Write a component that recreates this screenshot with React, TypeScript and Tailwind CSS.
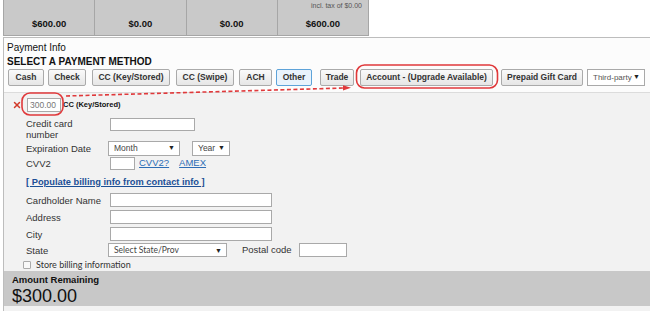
import { X } from 'lucide-react';

const totals = [
  { value: '$600.00' },
  { value: '$0.00' },
  { value: '$0.00' },
  { value: '$600.00', note: 'incl. tax of $0.00' },
];

const methods = [
  { label: 'Cash', w: 'w-[36px]', ml: 'ml-[1px]' },
  { label: 'Check', w: 'w-[38px]', ml: 'ml-[4px]' },
  { label: 'CC (Key/Stored)', w: 'w-[78px]', ml: 'ml-[6px]' },
  { label: 'CC (Swipe)', w: 'w-[58px]', ml: 'ml-[6px]' },
  { label: 'ACH', w: 'w-[33px]', ml: 'ml-[5px]' },
  { label: 'Other', w: 'w-[36px]', ml: 'ml-[4px]', active: true },
  { label: 'Trade', w: 'w-[34px]', ml: 'ml-[8px]' },
  { label: 'Account - (Upgrade Available)', w: 'w-[133px]', ml: 'ml-[6px]' },
  { label: 'Prepaid Gift Card', w: 'w-[82px]', ml: 'ml-[8px]' },
];

function FakeSelect({ text, className }: { text: string; className: string }) {
  return (
    <div
      className={`flex items-center justify-between whitespace-nowrap border border-[#a9a9a9] bg-white pl-[5px] pr-[4px] text-[8.5px] text-[#444] ${className}`}
    >
      <span>{text}</span>
      <span className="text-[7px] text-[#222]">▼</span>
    </div>
  );
}

function TextBox({ className }: { className: string }) {
  return <div className={`border border-[#a9a9a9] bg-white ${className}`} />;
}

function Label({ children }: { children: React.ReactNode }) {
  return <div className="w-[84px] shrink-0 text-[9.5px] leading-[11px] text-[#333]">{children}</div>;
}

export default function App() {
  return (
    <div className="relative h-[311px] w-[650px] overflow-hidden bg-white font-['Liberation_Sans',Arial,sans-serif]">
      {/* totals strip */}
      <div className="ml-[3px] grid h-[36px] w-[366px] grid-cols-4 border-b border-r border-[#a6a6a6] bg-[#c9c9c9]">
        {totals.map((t, i) => (
          <div key={i} className="relative flex items-end justify-center border-l border-[#a6a6a6] pb-[4px]">
            {t.note && (
              <span className="absolute right-[6px] top-[1px] text-[7px] text-[#555]">{t.note}</span>
            )}
            <span className="text-[9.5px] font-bold text-[#111]">{t.value}</span>
          </div>
        ))}
      </div>

      {/* payment panel */}
      <div className="ml-[3px] mt-[1px] border-l border-t border-[#bdbdbd]">
        <div className="bg-[#fcfcfc] pl-[3px] pt-[3px]">
          <div className="h-[14px] text-[10px] leading-[14px] text-[#111]">Payment Info</div>
          <div className="h-[14px] text-[10px] font-bold leading-[14px] text-[#111]">SELECT A PAYMENT METHOD</div>
          <div className="flex h-[23px] items-start">
            {methods.map((m) => (
              <button
                key={m.label}
                className={`${m.w} ${m.ml} flex h-[17px] shrink-0 items-center justify-center whitespace-nowrap rounded-[2px] border text-[8.5px] font-bold text-[#333] ${
                  m.active
                    ? 'border-[#5ea3d9] bg-[#e9f3fc]'
                    : 'border-[#aaaaaa] bg-gradient-to-b from-[#fafafa] to-[#e6e6e6]'
                }`}
              >
                {m.label}
              </button>
            ))}
            <FakeSelect text="Third-party" className="ml-[4px] h-[17px] w-[58px] pl-[4px] text-[8px] text-[#555]" />
          </div>
        </div>

        <div className="border-t border-[#dcdcdc] bg-[#f2f2f2]">
          {/* selected method row */}
          <div className="flex h-[24px] items-center">
            <X size={10} strokeWidth={3.5} className="ml-[8px] text-[#d23a2a]" />
            <div className="ml-[5px] flex h-[14px] w-[34px] items-center border border-[#a9a9a9] bg-white pl-[2px] text-[8.5px] text-[#777]">
              300.00
            </div>
            <span className="ml-[2px] text-[7.5px] font-bold text-[#111]">CC (Key/Stored)</span>
          </div>

          <div className="flex flex-col pl-[22px]">
            <div className="mt-[1px] flex h-[22px] items-start">
              <Label>
                Credit card
                <br />
                number
              </Label>
              <TextBox className="h-[13px] w-[85px]" />
            </div>
            <div className="flex h-[16px] items-center">
              <Label>Expiration Date</Label>
              <FakeSelect text="Month" className="-ml-[2px] h-[15px] w-[72px]" />
              <FakeSelect text="Year" className="ml-[12px] h-[15px] w-[38px]" />
            </div>
            <div className="flex h-[14px] items-center">
              <Label>CVV2</Label>
              <TextBox className="h-[13px] w-[25px]" />
              <span className="ml-[4px] text-[9.5px] text-[#2d6db5] underline">CVV2?</span>
              <span className="ml-[10px] text-[9.5px] text-[#2d6db5] underline">AMEX</span>
            </div>
            <div className="mt-[6px] h-[12px] text-[9.3px] font-bold leading-[12px] text-[#1b4f96] underline">
              [ Populate billing info from contact info ]
            </div>
            <div className="mt-[5px] flex h-[14px] items-center">
              <Label>Cardholder Name</Label>
              <TextBox className="h-[14px] w-[162px]" />
            </div>
            <div className="mt-[3px] flex h-[14px] items-center">
              <Label>Address</Label>
              <TextBox className="h-[14px] w-[162px]" />
            </div>
            <div className="mt-[3px] flex h-[14px] items-center">
              <Label>City</Label>
              <TextBox className="h-[14px] w-[162px]" />
            </div>
            <div className="mt-[2px] flex h-[14px] items-center">
              <Label>State</Label>
              <FakeSelect
                text="Select State/Prov"
                className="-ml-[2px] h-[14px] w-[119px] font-['Lato',sans-serif] text-[7.5px]"
              />
              <span className="ml-[15px] text-[9.5px] text-[#333]">Postal code</span>
              <TextBox className="ml-[7px] h-[14px] w-[48px]" />
            </div>
            <div className="mt-[1px] flex h-[13px] items-center font-['Lato',sans-serif]">
              <div className="-ml-[3px] h-[8px] w-[8px] rounded-[1px] border border-[#aaa] bg-[#f8f8f8]" />
              <span className="ml-[5px] text-[9px] text-[#333]">Store billing information</span>
            </div>
          </div>

          <div className="h-[35px] bg-[#c8c8c8] pl-[8px] pt-[3px]">
            <div className="text-[9.5px] font-bold leading-[12px] text-[#111]">Amount Remaining</div>
            <div className="text-[18px] leading-[20px] text-[#111]">$300.00</div>
          </div>
          <div className="h-[6px]" />
        </div>
      </div>

      {/* red annotations drawn over the screenshot */}
      <svg className="pointer-events-none absolute left-0 top-0" width="650" height="311" viewBox="0 0 650 311">
        <rect x="356.5" y="65" width="141" height="23" rx="8" fill="none" stroke="#e0393b" strokeWidth="1.6" />
        <rect x="22" y="93" width="41" height="22" rx="8" fill="none" stroke="#e0393b" strokeWidth="1.6" />
        <line x1="66" y1="96" x2="344" y2="88" stroke="#e0393b" strokeWidth="1.6" strokeDasharray="4 2.5" />
        <path d="M343 85.2 L351 87.8 L343 90.6 Z" fill="#e0393b" />
      </svg>
    </div>
  );
}
